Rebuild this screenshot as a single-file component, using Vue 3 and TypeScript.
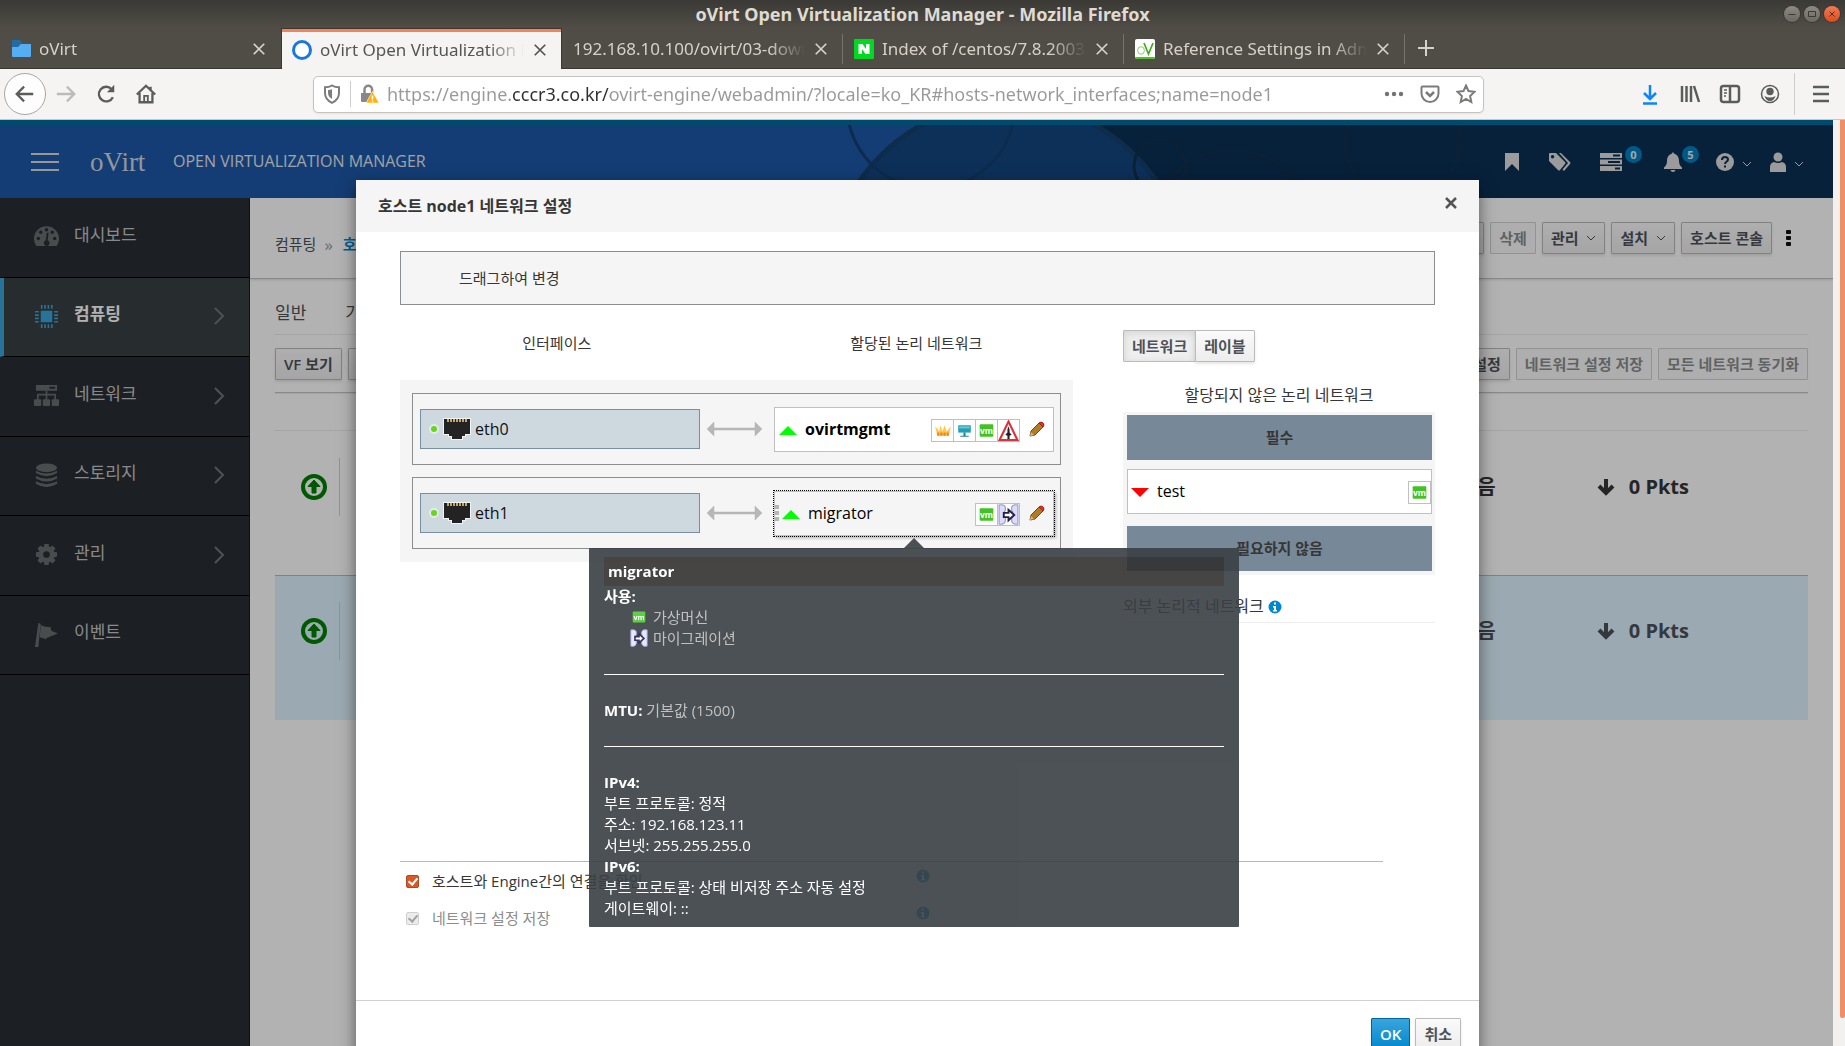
<script setup lang="ts">
import { ref } from 'vue'

interface Tab { title: string; icon: string; active?: boolean }
interface MenuItem { label: string; icon: string; active?: boolean; children?: boolean }
interface Nic { name: string; network: string; management?: boolean; icons: string[]; hovered?: boolean }

const windowTitle = 'oVirt Open Virtualization Manager - Mozilla Firefox'
const url = ref('https://engine.cccr3.co.kr/ovirt-engine/webadmin/?locale=ko_KR#hosts-network_interfaces;name=node1')

const tabs: Tab[] = [
  { title: 'oVirt', icon: 'folder' },
  { title: 'oVirt Open Virtualization Manager', icon: 'ring', active: true },
  { title: '192.168.10.100/ovirt/03-download', icon: '' },
  { title: 'Index of /centos/7.8.2003/', icon: 'nginx' },
  { title: 'Reference Settings in Administration', icon: 'ovirt' },
]

const menu: MenuItem[] = [
  { label: '대시보드', icon: 'dashboard' },
  { label: '컴퓨팅', icon: 'cpu', active: true, children: true },
  { label: '네트워크', icon: 'network', children: true },
  { label: '스토리지', icon: 'storage', children: true },
  { label: '관리', icon: 'gear', children: true },
  { label: '이벤트', icon: 'flag' },
]

const nics: Nic[] = [
  { name: 'eth0', network: 'ovirtmgmt', management: true, icons: ['crown', 'display', 'vm', 'alert'] },
  { name: 'eth1', network: 'migrator', icons: ['vm', 'migrate'], hovered: true },
]

const rows = [{ selected: false }, { selected: true }]

const ipLines = ['부트 프로토콜: 정적', '주소: 192.168.123.11', '서브넷: 255.255.255.0']
const ip6Lines = ['부트 프로토콜: 상태 비저장 주소 자동 설정', '게이트웨이: ::']

const verify = ref(true)
const save = ref(true)
const teeth = [0, 45, 90, 135, 180, 225, 270, 315]
</script>

<template>
  <div class="browser">
    <header class="titlebar">
      <span>{{ windowTitle }}</span>
      <div class="winbtns">
        <button aria-label="최소화"><svg viewBox="0 0 16 16"><path d="M4.500 8.500h7" /></svg></button>
        <button aria-label="최대화"><svg viewBox="0 0 16 16"><path d="M4.500 5.500h7v5h-7z" /></svg></button>
        <button class="quit" aria-label="닫기"><svg viewBox="0 0 16 16"><path d="M5.500 5.500l5 5M10.500 5.500l-5 5" /></svg></button>
      </div>
    </header>

    <nav class="tabs">
      <div v-for="t in tabs" :key="t.title" class="tab" :class="{ active: t.active }">
        <svg v-if="t.icon === 'folder'" class="fav" viewBox="0 0 20 20"><path d="M1 1h8l2 3v4H1z" fill="#236ba5" /><path d="M1 8h6l3-3h10v12q0 1-1 1H2q-1 0-1-1z" fill="#55adf2" /></svg>
        <svg v-else-if="t.icon === 'ring'" class="fav" viewBox="0 0 20 20"><circle cx="10" cy="10" r="8.500" fill="#fff" stroke="#1878e0" stroke-width="3" /></svg>
        <svg v-else-if="t.icon === 'nginx'" class="fav" viewBox="0 0 20 20"><rect width="20" height="20" rx="1" fill="#00d921" /><path d="M4.500 15V5h4l3.500 5V5h3.500v10h-4L8 10v5z" fill="#fff" /></svg>
        <svg v-else-if="t.icon === 'ovirt'" class="fav" viewBox="0 0 20 20"><rect width="20" height="20" rx="2" fill="#fff" /><path d="M0 18h20q0 2-2 2H2q-2 0-2-2z" fill="#4fc31b" /><ellipse cx="6" cy="11.500" rx="3.400" ry="3.800" fill="none" stroke="#84d263" /><path d="M9 4l4.500 11L18 4" fill="none" stroke="#3fae19" stroke-width="1.700" /></svg>
        <span class="tab-title">{{ t.title }}</span>
        <button class="tab-close" aria-label="탭 닫기"><svg viewBox="0 0 16 16"><path d="M2 2l12 12M14 2L2 14" /></svg></button>
      </div>
      <button class="newtab" aria-label="새 탭"><svg viewBox="0 0 18 18"><path d="M9 1v16M1 9h16" /></svg></button>
    </nav>

    <div class="toolbar">
      <div class="navbtns">
        <button class="back" aria-label="뒤로"><svg viewBox="0 0 24 24"><path d="M21 12H4M11 4l-8 8 8 8" /></svg></button>
        <button class="dim" aria-label="앞으로"><svg viewBox="0 0 24 24"><path d="M2 12h18M13 4l8 8-8 8" /></svg></button>
        <button aria-label="새로 고침"><svg viewBox="0 0 24 24"><path d="M19.500 15.500A8 8 0 1 1 18 6.500" /><path d="M21 2v8h-8z" fill="#5c5c5b" stroke="none" /></svg></button>
        <button aria-label="홈"><svg viewBox="0 0 24 24"><path d="M2 12.500L12 3l10 9.500M5 11v10h14V11M17 4v4" /><path d="M10 21v-7h4v7" stroke-width="2" /></svg></button>
      </div>
      <div class="urlbar">
        <svg class="ui" viewBox="0 0 20 20"><path d="M10 1.500C7.500 3 5 3.300 3 3.300V9c0 5 3 8 7 9.800C14 17 17 14 17 9V3.300c-2 0-4.500-.3-7-1.800z" fill="none" stroke="#7c7c7b" stroke-width="2" /><path d="M10 5v10c-2.500-1.500-4-3.500-4-6V6c1.500 0 3-.3 4-1z" fill="#7c7c7b" /></svg>
        <i class="vsep"></i>
        <svg class="ui" viewBox="0 0 20 20"><path d="M5.500 9V5.500a3.800 3.800 0 0 1 7.600 0V9" fill="none" stroke="#888" stroke-width="2.500" /><path d="M2 9h12v9H3q-1 0-1-1z" fill="#888" /><path d="M13.500 7.500L20 19H7z" fill="#ffb100" stroke="#fff" stroke-width=".6" /><path d="M13.500 11.500v4M13.500 16.500v1.300" stroke="#fff" stroke-width="1.500" /></svg>
        <input v-model="url" class="url" aria-label="주소" type="text" />
        <svg class="ui dots" viewBox="0 0 20 20"><circle cx="3" cy="10" r="2.200" /><circle cx="10" cy="10" r="2.200" /><circle cx="17" cy="10" r="2.200" /></svg>
        <svg class="ui line" viewBox="0 0 20 20"><path d="M2.500 2.500h15q1 0 1 1v6a8.500 8.500 0 0 1-17 0v-6q0-1 1-1z" /><path d="M6 8l4 4 4-4" stroke-width="2.500" /></svg>
        <svg class="ui line" viewBox="0 0 20 20"><path d="M10 1.500l2.500 5.600 6 .7-4.400 4.200 1.200 6L10 15l-5.300 3 1.200-6L1.500 7.800l6-.7z" /></svg>
      </div>
      <div class="tools">
        <button class="blue" aria-label="다운로드"><svg viewBox="0 0 22 22"><path d="M11 2v13M5 10l6 6 6-6M4 20.500h14" /></svg></button>
        <button aria-label="라이브러리"><svg viewBox="0 0 22 22"><path d="M3 3v16M7.500 3v16M12 3v16M15 3l5 16" /></svg></button>
        <button aria-label="사이드바"><svg viewBox="0 0 22 22"><rect x="2" y="3" width="18" height="16" rx="2.500" /><path d="M11 3v16" /><path d="M5 7h3M5 10h3M5 13h2" stroke-width="1.400" /></svg></button>
        <button aria-label="계정"><svg viewBox="0 0 22 22"><circle class="thin" cx="11" cy="11" r="8.500" /><circle cx="11" cy="8.500" r="3.700" fill="#5c5c5b" stroke="none" /><path d="M5.500 13q5.500 3 11 0-1.500 5-5.500 5t-5.500-5z" fill="#5c5c5b" stroke="none" /></svg></button>
        <i class="vsep tall"></i>
        <button aria-label="메뉴"><svg viewBox="0 0 22 22"><path d="M3 4h16M3 11h16M3 18h16" /></svg></button>
      </div>
    </div>

    <div class="viewport">
      <div class="page">
        <div class="masthead">
          <svg class="rings" width="760" height="73" viewBox="800 125 760 73">
            <path d="M1095 125H1560V198H1163A180 180 0 0 0 1095 125z" fill="#0b3055" />
            <circle cx="1008" cy="283" r="180" fill="#144580" stroke="#153f6d" stroke-width="5" />
            <circle cx="931" cy="105" r="84" fill="none" stroke="#123e70" stroke-width="3" />
            <g fill="none" stroke="#10304f" stroke-width="3"><circle cx="1160" cy="166" r="26" /><circle cx="1232" cy="232" r="82" /><circle cx="1403" cy="142" r="57" /></g>
          </svg>
          <button class="burger" aria-label="메뉴"><i></i><i></i><i></i></button>
          <span class="logo">oVirt</span>
          <span class="product">OPEN VIRTUALIZATION MANAGER</span>
          <div class="head-icons">
            <button class="h1i" aria-label="북마크"><svg width="16" height="18" viewBox="0 0 16 18"><path d="M1 0h14v18l-7-7-7 7z" /></svg></button>
            <button class="h2i" aria-label="태그"><svg width="22" height="18" viewBox="0 0 22 18"><path d="M0 1q0-1 1-1h6l9 9q1 1 0 2l-5 6q-1 1-2 0L0 8zM3.500 2a1.700 1.700 0 1 0 .1 0z" fill-rule="evenodd" /><path d="M10 0h2l9 9q1 1 0 2l-6 7-1.500-1.500L19 10z" /></svg></button>
            <button class="h3i" aria-label="작업"><svg width="22" height="18" viewBox="0 0 22 18"><path d="M0 0h22v5H0zM13 1.500v2h7v-2zM0 6.500h22v5H0zM8 8v2h12V8zM0 13h22v5H0zM15 14.500v2h5v-2z" fill-rule="evenodd" /></svg><b>0</b></button>
            <button class="h4i" aria-label="알림"><svg width="20" height="20" viewBox="0 0 20 20"><path d="M10 0l1.300 1.800C15 3 16 6 16 9q0 4 3 6.500v1.500H1v-1.500Q4 13 4 9c0-3 1-6 4.700-7.200zM7.500 18h5q-.5 2-2.500 2t-2.500-2z" /></svg><b>5</b></button>
            <button class="h5i" aria-label="도움말"><svg width="18" height="18" viewBox="0 0 18 18"><circle cx="9" cy="9" r="9" /><path d="M6 7q0-3 3-3t3 2.500C12 9 9 8.500 9 11M9 12.500v2" fill="none" stroke="#0b3055" stroke-width="2" /></svg><svg class="chev" width="10" height="6" viewBox="0 0 10 6"><path d="M1 1l4 4 4-4" /></svg></button>
            <button class="h6i" aria-label="사용자"><svg width="16" height="20" viewBox="0 0 16 20"><circle cx="8" cy="5" r="4.500" /><path d="M0 20v-5q0-4 4-5 4 2 8 0 4 1 4 5v5z" /></svg><svg class="chev" width="10" height="6" viewBox="0 0 10 6"><path d="M1 1l4 4 4-4" /></svg></button>
          </div>
        </div>

        <div class="columns">
          <aside class="sidebar">
            <nav>
              <a v-for="m in menu" :key="m.label" href="#" :class="{ current: m.active }">
                <svg v-if="m.icon === 'dashboard'" class="mi" viewBox="0 0 26 26"><path d="M2.500 23A13 13 0 1 1 23.500 23z" fill="currentColor" /><g fill="#292e34"><circle cx="13" cy="6" r="1.800" /><circle cx="7" cy="8.500" r="1.800" /><circle cx="19" cy="8.500" r="1.800" /><circle cx="4.500" cy="15" r="1.800" /><circle cx="21.500" cy="15" r="1.800" /><path d="M13.200 9h2l-1 8a3 3 0 1 1-2 0z" /></g></svg>
                <svg v-else-if="m.icon === 'cpu'" class="mi" viewBox="0 0 26 26"><rect x="7" y="7" width="12" height="12" fill="currentColor" /><path d="M8 1v4M11.500 1v4M15 1v4M18.500 1v4M8 21v4M11.500 21v4M15 21v4M18.500 21v4M1 8h4M1 11.500h4M1 15h4M1 18.500h4M21 8h4M21 11.500h4M21 15h4M21 18.500h4" stroke="currentColor" stroke-width="1.700" /></svg>
                <svg v-else-if="m.icon === 'network'" class="mi" viewBox="0 0 26 26"><path d="M2 2h22v6H2zM16 4v2h6V4z" fill="currentColor" fill-rule="evenodd" /><path d="M13 8v10M4 18v-6h18v6" fill="none" stroke="currentColor" stroke-width="1.800" /><g fill="currentColor"><rect x="0" y="17" width="7.500" height="7" rx="1" /><rect x="9.200" y="17" width="7.500" height="7" rx="1" /><rect x="18.500" y="17" width="7.500" height="7" rx="1" /></g></svg>
                <svg v-else-if="m.icon === 'storage'" class="mi" viewBox="0 0 26 26"><g fill="currentColor"><ellipse cx="13" cy="5" rx="11" ry="4.500" /><path d="M2 8q11 6 22 0v2.500q-11 6.500-22 0zM2 13.500q11 6 22 0V16q-11 6.500-22 0zM2 19q11 6 22 0v2.500q-11 7-22 0z" /></g></svg>
                <svg v-else-if="m.icon === 'gear'" class="mi" viewBox="0 0 26 26"><circle cx="13" cy="13" r="6" fill="none" stroke="currentColor" stroke-width="5" /><rect v-for="a in teeth" :key="a" x="10.500" y="2" width="5" height="5" rx="1" fill="currentColor" :transform="`rotate(${a} 13 13)`" /></svg>
                <svg v-else class="mi" viewBox="0 0 26 26"><path d="M5 1l2 1-2.500 24H1L4.500 1z" fill="currentColor" /><path d="M7 3q5 3 10 2l1 4 7 3-8 3q-4 1-5 3-3-2-6-2z" fill="currentColor" /></svg>
                <span>{{ m.label }}</span>
                <svg v-if="m.children" class="arrow" viewBox="0 0 12 18"><path d="M2 1l8 8-8 8" /></svg>
              </a>
            </nav>
          </aside>

          <main>
            <div class="crumbs">
              <span>컴퓨팅</span><span class="raquo">»</span><a href="#">호스트</a>
              <div class="actions">
                <button class="btn">편집</button>
                <button class="btn" disabled>삭제</button>
                <button class="btn">관리<svg class="caret" viewBox="0 0 10 6"><path d="M1 1l4 4 4-4" /></svg></button>
                <button class="btn">설치<svg class="caret" viewBox="0 0 10 6"><path d="M1 1l4 4 4-4" /></svg></button>
                <button class="btn">호스트 콘솔</button>
                <button class="kebab" aria-label="더 보기"><i></i><i></i><i></i></button>
              </div>
            </div>
            <div class="detail">
              <div class="subtabs"><a href="#">일반</a><a href="#">가상 머신</a></div>
              <div class="subactions">
                <button class="btn">VF 보기</button>
                <button class="btn">모두 확장</button>
                <button class="btn push">호스트 네트워크 설정</button>
                <button class="btn" disabled>네트워크 설정 저장</button>
                <button class="btn" disabled>모든 네트워크 동기화</button>
              </div>
              <div class="listhead"></div>
              <div v-for="(r, i) in rows" :key="i" class="row" :class="{ selected: r.selected }">
                <svg class="up" viewBox="0 0 26 26"><circle cx="13" cy="13" r="11" fill="none" stroke="#008000" stroke-width="4" /><path d="M13 6l6 6.500h-4V19h-4v-6.500H7z" fill="#008000" stroke="#008000" /></svg>
                <i class="bar"></i>
                <span class="state">없음</span>
                <svg class="down" viewBox="0 0 18 18"><path d="M9 1v14M2 8l7 7 7-7" /></svg>
                <span class="pkts">0 Pkts</span>
              </div>
            </div>
          </main>
        </div>

        <div class="backdrop">
          <section class="dialog" role="dialog" aria-labelledby="dlg">
            <header class="dlg-head">
              <h1 id="dlg">호스트 node1 네트워크 설정</h1>
              <button aria-label="닫기"><svg viewBox="0 0 12 12"><path d="M1 1l10 10M11 1L1 11" /></svg></button>
            </header>
            <div class="dlg-body">
              <div class="drag">드래그하여 변경</div>
              <div class="split">
                <div>
                  <div class="heads"><span>인터페이스</span><span></span><span>할당된 논리 네트워크</span></div>
                  <div class="panel">
                    <div v-for="n in nics" :key="n.name" class="group">
                      <div class="nic">
                        <i class="led"></i>
                        <svg class="port" viewBox="0 0 28 22"><path d="M0 0h28v17h-5v2h-3v3H8v-3H5v-2H0z" fill="#f1f3f4" /><path d="M1 1h26v15h-5v2h-3v3H9v-3H6v-2H1z" fill="#232323" /><path d="M4 2.500h20" stroke="#c5a75c" stroke-width="3" stroke-dasharray="2 1" /></svg>
                        <span>{{ n.name }}</span>
                      </div>
                      <svg class="link" viewBox="0 0 55 14"><path d="M0 7l7-7v6h41V0l7 7-7 7V8H7v6z" fill="#b7b7b7" stroke="#b7b7b7" stroke-width=".5" /></svg>
                      <div class="net" :class="{ hovered: n.hovered }">
                        <i v-if="n.hovered" class="grip"></i>
                        <i class="tri"></i>
                        <span class="name" :class="{ strong: n.management }">{{ n.network }}</span>
                        <div class="flags">
                          <span v-for="f in n.icons" :key="f" class="flag">
                            <svg v-if="f === 'crown'" viewBox="0 0 20 20"><path d="M3 6l4 5 1-6 2 6 2-6 2 6 4-5-2 9H5z" fill="#ffc648" /><path d="M5 13.500h11" stroke="#f08418" stroke-width="3" stroke-dasharray="2 1" /></svg>
                            <svg v-else-if="f === 'display'" viewBox="0 0 20 20"><path d="M4 5h12v7H4z" fill="#219fb5" /><path d="M5 6h10v2H5z" fill="#68c7d3" /><path d="M9 12h2v3h3v1H6v-1h3z" fill="#257f95" /></svg>
                            <svg v-else-if="f === 'vm'" viewBox="0 0 20 20"><rect x="3.500" y="4" width="13" height="12" rx="1" fill="#43c225" /><text x="10" y="13" text-anchor="middle" class="vm">vm</text></svg>
                            <svg v-else-if="f === 'alert'" viewBox="0 0 20 20"><path d="M10 1.500L18.500 19h-17z" fill="#fff" stroke="#dd3239" stroke-width="2" /><path d="M10 6l1 3v3l2 2-2 1v3H9v-3l-2-1 2-2V9z" fill="#222" /></svg>
                            <svg v-else viewBox="0 0 20 20"><path d="M1 1q5-1 6 2v3q-3 3 0 7v3q-1 4-6 3zM19 1q-5-1-6 2v3q3 3 0 7v3q1 4 6 3z" fill="#dcdcf6" stroke="#9393c8" /><path d="M5.500 8.500h4.500V5.500l5.500 5-5.500 5v-3H5.500z" fill="#fff" stroke="#20204f" stroke-width="1.800" /></svg>
                          </span>
                        </div>
                        <button class="pencil" aria-label="편집"><svg viewBox="0 0 16 16"><path d="M1 15l1-5 8-8 4 4-8 8z" fill="#b07b23" stroke="#764b0d" /><path d="M10 2q2-2 4 0t0 4l-4-4z" fill="#e4312a" stroke="#b31915" /><path d="M1 15l1-4 3 3z" fill="#d7b77f" /></svg></button>

                        <div v-if="n.hovered" class="tooltip" role="tooltip">
                          <div class="tip-title">migrator</div>
                          <strong>사용:</strong>
                          <ul>
                            <li><svg viewBox="0 0 20 20"><rect x="3" y="4" width="14" height="12" rx="1" fill="#4ecb30" /><text x="10" y="13" text-anchor="middle" class="vm">vm</text></svg>가상머신</li>
                            <li><svg viewBox="0 0 20 20"><path d="M1 1q5-1 6 2v3q-3 3 0 7v3q-1 4-6 3zM19 1q-5-1-6 2v3q3 3 0 7v3q1 4 6 3z" fill="#e5e5ff" stroke="#a8a8dc" /><path d="M5.500 8.500h4.500V5.500l5.500 5-5.500 5v-3H5.500z" fill="#fff" stroke="#20204f" stroke-width="1.800" /></svg>마이그레이션</li>
                          </ul>
                          <hr />
                          <div class="soft"><strong>MTU:</strong> 기본값 (1500)</div>
                          <hr />
                          <strong>IPv4:</strong>
                          <div v-for="l in ipLines" :key="l">{{ l }}</div>
                          <strong>IPv6:</strong>
                          <div v-for="l in ip6Lines" :key="l">{{ l }}</div>
                        </div>
                      </div>
                    </div>
                  </div>
                </div>
                <div class="right">
                  <div class="toggle"><button class="btn on">네트워크</button><button class="btn">레이블</button></div>
                  <h2>할당되지 않은 논리 네트워크</h2>
                  <div class="pool">
                    <div class="band">필수</div>
                    <div class="net free">
                      <i class="tri red"></i><span class="name">test</span>
                      <div class="flags"><span class="flag"><svg viewBox="0 0 20 20"><rect x="3.500" y="4" width="13" height="12" rx="1" fill="#43c225" /><text x="10" y="13" text-anchor="middle" class="vm">vm</text></svg></span></div>
                    </div>
                    <div class="band">필요하지 않음</div>
                  </div>
                  <h3>외부 논리적 네트워크<svg class="info" viewBox="0 0 14 14"><circle cx="7" cy="7" r="6.500" /><path d="M6 2.500h2v2H6zM5 6h3v4h1v1.500H5V10h1V7.500H5z" fill="#fff" /></svg></h3>
                </div>
              </div>
              <div class="options">
                <div class="opt">
                  <input id="verify" v-model="verify" type="checkbox" /><label for="verify">호스트와 Engine간의 연결을 확인</label>
                  <svg class="info" viewBox="0 0 14 14"><circle cx="7" cy="7" r="6.500" /><path d="M6 2.500h2v2H6zM5 6h3v4h1v1.500H5V10h1V7.500H5z" fill="#fff" /></svg>
                </div>
                <div class="opt">
                  <input id="save" v-model="save" type="checkbox" disabled /><label for="save">네트워크 설정 저장</label>
                  <svg class="info" viewBox="0 0 14 14"><circle cx="7" cy="7" r="6.500" /><path d="M6 2.500h2v2H6zM5 6h3v4h1v1.500H5V10h1V7.500H5z" fill="#fff" /></svg>
                </div>
              </div>
            </div>
            <footer class="dlg-foot"><button class="btn primary">OK</button><button class="btn">취소</button></footer>
          </section>
        </div>
      </div>
      <div class="scroll"><i></i></div>
    </div>
  </div>
</template>

<style>
body { margin: 0; overflow: hidden; }
</style>

<style scoped>
* { box-sizing: border-box; }
.browser { height: 100vh; display: flex; flex-direction: column; overflow: hidden; font: 15px/21px "Open Sans", "Noto Sans CJK KR", sans-serif; color: #363636; }
button { border: 0; background: none; padding: 0; margin: 0; font: inherit; color: inherit; display: flex; align-items: center; justify-content: center; flex: none; }
a { color: inherit; text-decoration: none; }
svg { display: block; flex: none; }

.titlebar { flex: none; height: 28px; display: flex; align-items: center; justify-content: center; position: relative; background: linear-gradient(#3a3935, #504d46); color: #dfdbd2; font: bold 18px/28px "Noto Sans", sans-serif; }
.winbtns { position: absolute; right: 5px; top: 6px; display: flex; gap: 4px; }
.winbtns button { width: 16px; height: 16px; border-radius: 50%; background: linear-gradient(#8d8a82, #6a6861); box-shadow: 0 0 0 1px #3a3935; }
.winbtns svg { width: 16px; height: 16px; fill: none; stroke: #3a3935; }
.winbtns .quit { background: linear-gradient(#f27b53, #df4a1a); }

.tabs { flex: none; height: 41px; display: flex; background: #504d46; border-bottom: 1px solid #3a3833; }
.tab { width: 281px; display: flex; align-items: center; padding: 2px 14px 0 11px; gap: 8px; position: relative; color: #d6d2ca; font: 17px/24px "Noto Sans", sans-serif; }
.tab + .tab:not(.active)::after, .tab:last-of-type::after { content: ""; position: absolute; right: 0; top: 6px; height: 30px; width: 1px; background: #76736b; }
.tab.active { height: 41px; background: #f5f4f2; color: #555; border: 1px solid #3a3833; border-width: 1px 1px 0; box-shadow: inset 0 3px #f5825a; padding: 2px 13px 0 10px; }
.fav { width: 20px; height: 20px; }
.tab-title { flex: 1; white-space: nowrap; overflow: hidden; mask-image: linear-gradient(to right, #000 calc(100% - 36px), transparent); }
.tab-close svg { width: 16px; height: 16px; padding: 1px; fill: none; stroke: currentColor; stroke-width: 2; }
.newtab { width: 41px; color: #d6d2ca; }
.newtab svg { width: 18px; height: 18px; stroke: currentColor; stroke-width: 2; }

.toolbar { flex: none; height: 51px; display: flex; align-items: center; background: #f5f4f2; border-bottom: 1px solid #c9c5c0; color: #5c5c5b; }
.toolbar button svg { fill: none; stroke: currentColor; }
.navbtns { display: flex; align-items: center; width: 313px; padding-left: 4px; flex: none; }
.navbtns button { width: 40px; height: 42px; }
.navbtns svg { width: 22px; height: 22px; stroke-width: 2.5; }
.navbtns .back { width: 42px; border: 1px solid #aaa7a3; border-radius: 50%; background: #fdfdfd; }
.navbtns .dim { color: #bdbbb9; }
.urlbar { flex: 1; height: 37px; display: flex; align-items: center; background: #fff; border: 1px solid #c7c3be; border-radius: 5px; padding: 0 7px 0 8px; gap: 8px; box-shadow: 0 1px 2px #0001; }
.ui { width: 20px; height: 20px; }
.ui.dots { fill: #737372; }
.ui.line { fill: none; stroke: #7b7b7a; stroke-width: 2; margin-left: 8px; }
.vsep { width: 1px; height: 26px; background: #cfcccb; }
.vsep.tall { height: 42px; }
.url { flex: 1; min-width: 0; border: 0; outline: 0; padding: 0; height: 26px; font: 18px/26px "Noto Sans", sans-serif; color: transparent; background: linear-gradient(to right, #999 0 125px, #2e2e2e 125px 223px, #999 223px); background-clip: text; }
.tools { display: flex; align-items: center; justify-content: flex-end; width: 361px; padding-right: 4px; flex: none; }
.tools button { width: 40px; height: 40px; }
.tools svg { width: 22px; height: 22px; stroke-width: 2.5; }
.tools .thin { stroke-width: 1.5; }
.tools .vsep { margin: 0 6px 0 4px; }
.tools .blue { color: #0a84ff; }

.viewport { flex: 1; min-height: 0; display: flex; }
.scroll { width: 12px; background: #f2f1ef; padding-left: 7px; flex: none; }
.scroll i { display: block; height: 97%; background: #f28e66; border-radius: 0 0 2px 2px; }
.page { flex: 1; min-width: 0; display: flex; flex-direction: column; position: relative; overflow: hidden; background: #fff; }

.masthead { flex: none; height: 78px; border-top: 5px solid #006a9e; background: linear-gradient(to right, #1d58a8 0 1160px, #0b3055 1160px); display: flex; align-items: center; position: relative; padding: 0 27px 0 30px; color: #dedede; }
.rings { position: absolute; left: 800px; top: 0; }
.burger { flex-direction: column; gap: 6px; width: 30px; }
.burger i { width: 28px; height: 2px; background: #dcd8d4; }
.logo { margin-left: 30px; width: 83px; font: 27px/30px "Liberation Serif", serif; color: #d5d9e0; }
.product { font-size: 16px; font-weight: 500; color: #e6e8ec; }
.head-icons { margin-left: auto; display: flex; align-items: center; position: relative; }
.head-icons button { position: relative; justify-content: flex-start; height: 24px; }
.head-icons svg { fill: currentColor; }
.head-icons .chev, .caret { fill: none; stroke: currentColor; }
.head-icons .chev { margin: 4px 0 0 8px; }
.head-icons b { position: absolute; left: 25px; top: -4px; width: 17px; height: 17px; border-radius: 9px; background: #0080c0; font: bold 11px/17px "Open Sans", sans-serif; text-align: center; color: #eee; }
.h1i { width: 45px; } .h2i { width: 51px; } .h3i { width: 63px; } .h4i { width: 53px; } .h5i { width: 54px; } .h6i { width: 36px; }
.head-icons .h4i b { left: 19px; }

.columns { flex: 1; min-height: 0; display: flex; }
.sidebar { width: 250px; flex: none; background: #292e34; border-right: 1px solid #16181b; }
.sidebar nav { height: 477px; display: flex; flex-direction: column; }
.sidebar a { flex: 1; display: flex; align-items: center; padding: 0 24px 1px 34px; border-bottom: 1px solid #030303; color: #686d72; }
.sidebar a span { flex: 1; margin: 0 0 4px 15px; font-size: 17px; line-height: 24px; color: #c4c5c6; }
.sidebar .current { background: #393f42; color: #39a5dc; border-left: 4px solid #39a5dc; padding-left: 30px; }
.sidebar .current span { color: #fff; font-weight: bold; }
.mi { width: 25px; height: 25px; }
.arrow { width: 12px; height: 18px; fill: none; stroke: #72767b; stroke-width: 2; }

main { flex: 1; min-width: 0; }
.crumbs { height: 81px; display: flex; align-items: center; padding: 12px 35px 0 25px; border-bottom: 1px solid #c4c4c4; box-shadow: 0 1px 2px #0002; color: #4d5258; }
.crumbs a { color: #0088ce; font-weight: 600; }
.raquo { margin: 0 10px 0 8px; color: #9c9c9c; font-size: 17px; }
.actions { margin: 0 0 12px auto; display: flex; align-items: center; gap: 6px; }
.btn { height: 32px; padding: 0 8px; border: 1px solid #bbb; border-radius: 1px; background: linear-gradient(#fafafa, #ededed); box-shadow: 0 2px 3px #0303031a; color: #4d5258; font-weight: 600; white-space: nowrap; }
.btn:disabled { background: #fafafa; box-shadow: none; color: #8b8d8f; border-color: #d1d1d1; }
.caret { width: 10px; height: 6px; margin-left: 8px; }
.kebab { flex-direction: column; gap: 2px; width: 20px; }
.kebab i { width: 5px; height: 4px; background: #111; border-radius: 1px; }
.detail { padding: 0 25px; }
.subtabs { height: 56px; padding-top: 13px; display: flex; align-items: center; gap: 39px; font-size: 17px; line-height: 24px; border-bottom: 1px solid #ededed; color: #4d5258; }
.subactions { height: 58px; display: flex; align-items: center; gap: 6px; border-bottom: 1px solid #c4c4c4; box-shadow: 0 1px 1px #0001; padding-top: 1px; }
.subactions .push { margin-left: auto; }
.listhead { height: 38px; border-bottom: 1px solid #ededed; }
.row { height: 144px; display: flex; align-items: center; padding: 0 119px 32px 26px; color: #363636; font-size: 20px; font-weight: bold; line-height: 28px; }
.row.selected { background: #def3ff; border-top: 1px solid #bbb; height: 145px; padding-bottom: 34px; color: #4d5258; }
.up { width: 26px; height: 26px; }
.bar { width: 1px; height: 58px; margin-left: 12px; background: #d1d1d1; }
.state { margin-left: auto; }
.down { width: 18px; height: 18px; margin: 0 14px 0 101px; fill: none; stroke: currentColor; stroke-width: 4; }

.backdrop { position: absolute; inset: 0; padding: 60px 354px 0 356px; background: rgba(0, 0, 0, .3); overflow: hidden; }
.dialog { background: #fff; box-shadow: 0 5px 15px rgba(0, 0, 0, .5); }
.dlg-head { height: 52px; background: #f5f5f5; display: flex; align-items: center; justify-content: space-between; padding: 0 22px; }
h1 { margin: 0; font-size: 16px; line-height: 24px; font-weight: bold; }
.dlg-head svg { width: 12px; height: 12px; margin-bottom: 6px; stroke: #555; stroke-width: 2.5; }
.dlg-body { min-height: 768px; padding: 19px 44px 0; display: flex; flex-direction: column; }
.drag { height: 54px; border: 1px solid #8b8d8f; background: #f5f5f5; padding-left: 58px; line-height: 52px; }
.split { display: grid; grid-template-columns: 1fr 312px; gap: 50px; }
.heads, .group { display: grid; grid-template-columns: 1fr 74px 1fr; align-items: center; }
.heads { height: 75px; padding: 2px 14px 0; text-align: center; }
.panel { background: #f5f5f5; padding: 13px 12px; display: flex; flex-direction: column; gap: 12px; }
.group { height: 72px; border: 1px solid #8b8d8f; padding: 0 6px 0 7px; justify-items: center; }
.nic { width: 100%; height: 40px; background: #ced8df; border: 1px solid #778fa0; display: flex; align-items: center; padding-left: 8px; color: #111; font-size: 16px; }
.led { width: 10px; height: 10px; border-radius: 50%; background: #66d816; border: 2px solid #e4eaee; }
.port { width: 28px; height: 22px; margin: 0 4px; }
.link { width: 55px; height: 14px; margin-right: 6px; }
.net { width: 100%; height: 45px; background: #fff; border: 1px solid #c0c0c0; display: flex; align-items: center; position: relative; padding: 0 8px 0 4px; color: #000; font-size: 16px; }
.net.hovered { background: #f5f5f5; outline: 1px dotted #000; box-shadow: 2px 2px 3px #0004; padding-left: 0; }
.grip { width: 4px; height: 16px; margin-right: 3px; background: repeating-linear-gradient(#b7b7b7 0 4px, transparent 4px 6px); }
.tri { border: 9px solid transparent; border-top: 0; border-bottom: 9px solid #0f0; width: 0; height: 0; margin-top: 2px; }
.tri.red { border-bottom: 0; border-top: 9px solid #f00; }
.name { margin-left: 8px; }
.strong { font-weight: bold; }
.flags { margin-left: auto; display: flex; }
.flag { width: 23px; height: 23px; border: 1px solid #c0c0c0; background: #fff; margin-left: -1px; margin-top: 2px; }
.flag svg { width: 21px; height: 21px; }
.vm { font: bold 8px "Open Sans", sans-serif; fill: #fff; }
.pencil { margin-left: 9px; }
.pencil svg { width: 16px; height: 16px; }

.tooltip { position: absolute; z-index: 2; left: 50%; top: calc(100% + 13px); width: 650px; transform: translateX(-50%); padding: 9px 15px 8px; background: #393f44; border-radius: 1px; opacity: .9; color: #fff; font-size: 15px; line-height: 21px; }
.tooltip::before { content: ""; position: absolute; left: calc(50% - 10px); top: -10px; border: 10px solid transparent; border-top: 0; border-bottom-color: #393f44; }
.tip-title { height: 29px; line-height: 29px; padding-left: 4px; background: #323130; font-weight: bold; }
.tooltip strong { font-weight: bold; color: #fff; }
.tooltip ul { list-style: none; margin: 0; padding: 0 0 0 25px; color: #bbb; }
.tooltip li { display: flex; align-items: center; height: 21px; }
.tooltip li svg { width: 20px; height: 18px; margin-right: 4px; }
.tooltip hr { border: 0; height: 1px; background: #fff; margin: 25px 0; }
.soft { color: #bbb; }

.toggle { display: flex; margin-top: 25px; }
.toggle .btn + .btn { margin-left: -1px; }
.toggle .on { box-shadow: inset 0 2px 8px #0302; background: #efefef; }
h2, h3 { margin: 0; font-size: 16px; font-weight: normal; }
h2 { line-height: 30px; margin: 18px 0 2px; text-align: center; }
.pool { background: #f5f5f5; padding: 3px 3px 4px 4px; }
.band { height: 45px; line-height: 44px; background: #789; text-align: center; font-weight: bold; }
.free { margin: 9px 0 12px; padding: 0 0 0 3px; }
h3 { display: flex; align-items: center; margin-top: 16px; line-height: 31px; border-bottom: 1px solid #ededed; }
.info { width: 14px; height: 14px; margin-left: 4px; fill: #0088ce; }
.options { margin: auto 52px 0 0; padding-top: 1px; height: 139px; border-top: 1px solid #b8b8b8; }
.opt { height: 37px; display: flex; align-items: center; padding-left: 6px; }
.opt label { width: 484px; margin-left: 13px; }
.opt .info { margin: 0 0 12px; }
.opt input { appearance: none; width: 13px; height: 13px; margin: 0; border: 1px solid #a94a24; border-radius: 2px; background: #dc5626; position: relative; flex: none; }
.opt input::after { content: ""; position: absolute; left: 3px; top: 0; width: 4px; height: 7px; border: solid #fff; border-width: 0 2px 2px 0; transform: rotate(40deg); }
.opt input:disabled { border-color: #cfcfcf; background: #ececec; }
.opt input:disabled::after { border-color: #a3a3a3; }
.opt input:disabled + label { color: #8b8d8f; }
.dlg-foot { height: 70px; border-top: 1px solid #d1d1d1; display: flex; justify-content: flex-end; gap: 5px; padding: 17px 18px 0; }
.primary { color: #fff; border-color: #00659c; background: linear-gradient(#39a5dc, #0088ce); }
</style>
